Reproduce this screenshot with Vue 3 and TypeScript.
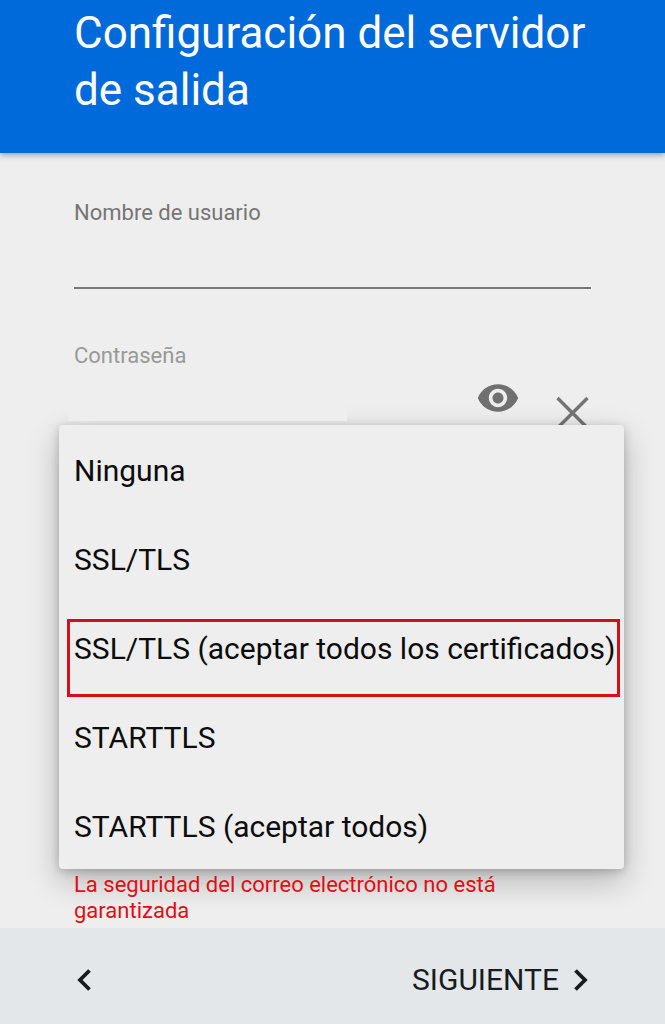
<script setup lang="ts">
import { ref } from 'vue'

const username = ref('')
const password = ref('')
const passwordVisible = ref(false)
const options: string[] = [
  'Ninguna',
  'SSL/TLS',
  'SSL/TLS (aceptar todos los certificados)',
  'STARTTLS',
  'STARTTLS (aceptar todos)',
]
const selected = ref(options[2])
</script>

<template>
  <div class="page">
    <header class="header">
      <h1>Configuración del servidor de salida</h1>
    </header>

    <main class="content">
      <div class="field">
        <label for="username">Nombre de usuario</label>
        <input id="username" v-model="username" class="text-input" type="text" autocomplete="off" />
      </div>

      <div class="field password">
        <label for="password">Contraseña</label>
        <div class="password-row">
          <input
            id="password"
            v-model="password"
            class="password-input"
            :type="passwordVisible ? 'text' : 'password'"
            autocomplete="off"
          />
          <button
            class="icon-button eye"
            type="button"
            aria-label="Mostrar contraseña"
            @click="passwordVisible = !passwordVisible"
          >
            <svg width="44" height="44" viewBox="0 0 24 24" aria-hidden="true">
              <path
                fill="#707070"
                d="M12 4.5C7 4.500 2.730 7.610 1 12c1.730 4.390 6 7.500 11 7.500s9.270-3.110 11-7.500c-1.730-4.390-6-7.500-11-7.500zM12 17c-2.760 0-5-2.240-5-5s2.240-5 5-5 5 2.240 5 5-2.240 5-5 5zm0-8c-1.660 0-3 1.340-3 3s1.340 3 3 3 3-1.340 3-3-1.340-3-3-3z"
              />
            </svg>
          </button>
          <button class="icon-button clear" type="button" aria-label="Borrar" @click="password = ''">
            <svg width="36" height="34" viewBox="0 0 36 34" aria-hidden="true">
              <path d="M2.500 2 32.500 32M32.500 2 2.500 32" stroke="#747474" stroke-width="3.400" fill="none" />
            </svg>
          </button>
        </div>
      </div>

      <div class="menu" role="listbox" aria-label="Tipo de seguridad">
        <button
          v-for="option in options"
          :key="option"
          class="option"
          :class="{ selected: option === selected }"
          type="button"
          role="option"
          :aria-selected="option === selected"
          @click="selected = option"
        >
          {{ option }}
        </button>
      </div>

      <p class="warning">La seguridad del correo electrónico no está garantizada</p>
    </main>

    <footer class="footer">
      <button class="nav" type="button" aria-label="Atrás">
        <svg width="20" height="24" viewBox="0 0 20 24" aria-hidden="true">
          <path d="M15.500 2.500 6 12l9.500 9.500" stroke="#181c1e" stroke-width="3.800" fill="none" />
        </svg>
      </button>
      <button class="nav" type="button">
        <span>SIGUIENTE</span>
        <svg width="20" height="24" viewBox="0 0 20 24" aria-hidden="true">
          <path d="M4.500 2.500 14 12l-9.500 9.500" stroke="#181c1e" stroke-width="3.800" fill="none" />
        </svg>
      </button>
    </footer>
  </div>
</template>

<style>
body {
  margin: 0;
  background: #eeeeee;
}
</style>

<style scoped>
.page {
  display: flex;
  flex-direction: column;
  min-height: 100vh;
  background: #eeeeee;
  font-family: Roboto, "Liberation Sans", sans-serif;
}

.page *,
.page *::after {
  box-sizing: border-box;
}

.header {
  position: relative;
  padding: 5px 74px 34px;
  background: #006adb;
  box-shadow: 0 2px 6px rgba(0, 0, 0, 0.35);
}

h1 {
  margin: 0;
  color: #ffffff;
  font-size: 44px;
  font-weight: 400;
  line-height: 57px;
}

.content {
  display: flex;
  flex: 1;
  flex-direction: column;
  padding-top: 47px;
  overflow: hidden;
}

.field {
  display: flex;
  flex-direction: column;
  margin: 0 74px;
  color: #757575;
  font-size: 22px;
  line-height: 26px;
}

.password {
  margin-top: 54px;
}

.password label {
  color: #999999;
}

input,
button {
  padding: 0;
  border: 0;
  border-radius: 0;
  background: transparent;
  font-family: inherit;
  outline: none;
}

.text-input {
  height: 63px;
  padding-top: 16px;
  border-bottom: 2px solid #777777;
  color: #111111;
  font-size: 30px;
}

.password-row {
  display: flex;
  align-items: flex-start;
  height: 56px;
}

/* The input's own background stays above the menu's shadow. */
.password-input {
  position: relative;
  z-index: 2;
  width: 54%;
  height: 52px;
  margin-left: -6px;
  padding: 0 6px;
  background: #eeeeee;
  font-size: 30px;
}

.icon-button {
  display: flex;
  flex: none;
  cursor: pointer;
}

.eye {
  margin-top: 7px;
  margin-left: auto;
}

.clear {
  margin-top: 27px;
  margin-left: 35px;
}

.menu {
  position: relative;
  z-index: 1;
  display: flex;
  flex-direction: column;
  margin: 0 41px 0 59px;
  border-radius: 4px;
  background: #eeeeee;
  box-shadow: 0 12px 32px rgba(0, 0, 0, 0.24), 0 2px 10px rgba(0, 0, 0, 0.2);
}

.option {
  position: relative;
  padding: 28px 8px 25px 15px;
  color: #0c0c0c;
  font-size: 30px;
  line-height: 36px;
  text-align: left;
  white-space: nowrap;
  cursor: pointer;
}

.option:last-child {
  padding-bottom: 24px;
}

.selected::after {
  position: absolute;
  inset: 16px 4px -5px 8px;
  border: 3px solid #d40f16;
  content: "";
}

.warning {
  position: relative;
  z-index: 2;
  margin: 0;
  padding: 3px 74px 4px;
  color: #e20d14;
  font-size: 22px;
  line-height: 26px;
}

.footer {
  position: relative;
  z-index: 3;
  display: flex;
  align-items: center;
  justify-content: space-between;
  padding: 34px 74px 26px;
  background: #e3e7ea;
}

.nav {
  display: flex;
  align-items: center;
  gap: 12px;
  color: #181c1e;
  font-size: 30px;
  line-height: 36px;
  cursor: pointer;
}
</style>
